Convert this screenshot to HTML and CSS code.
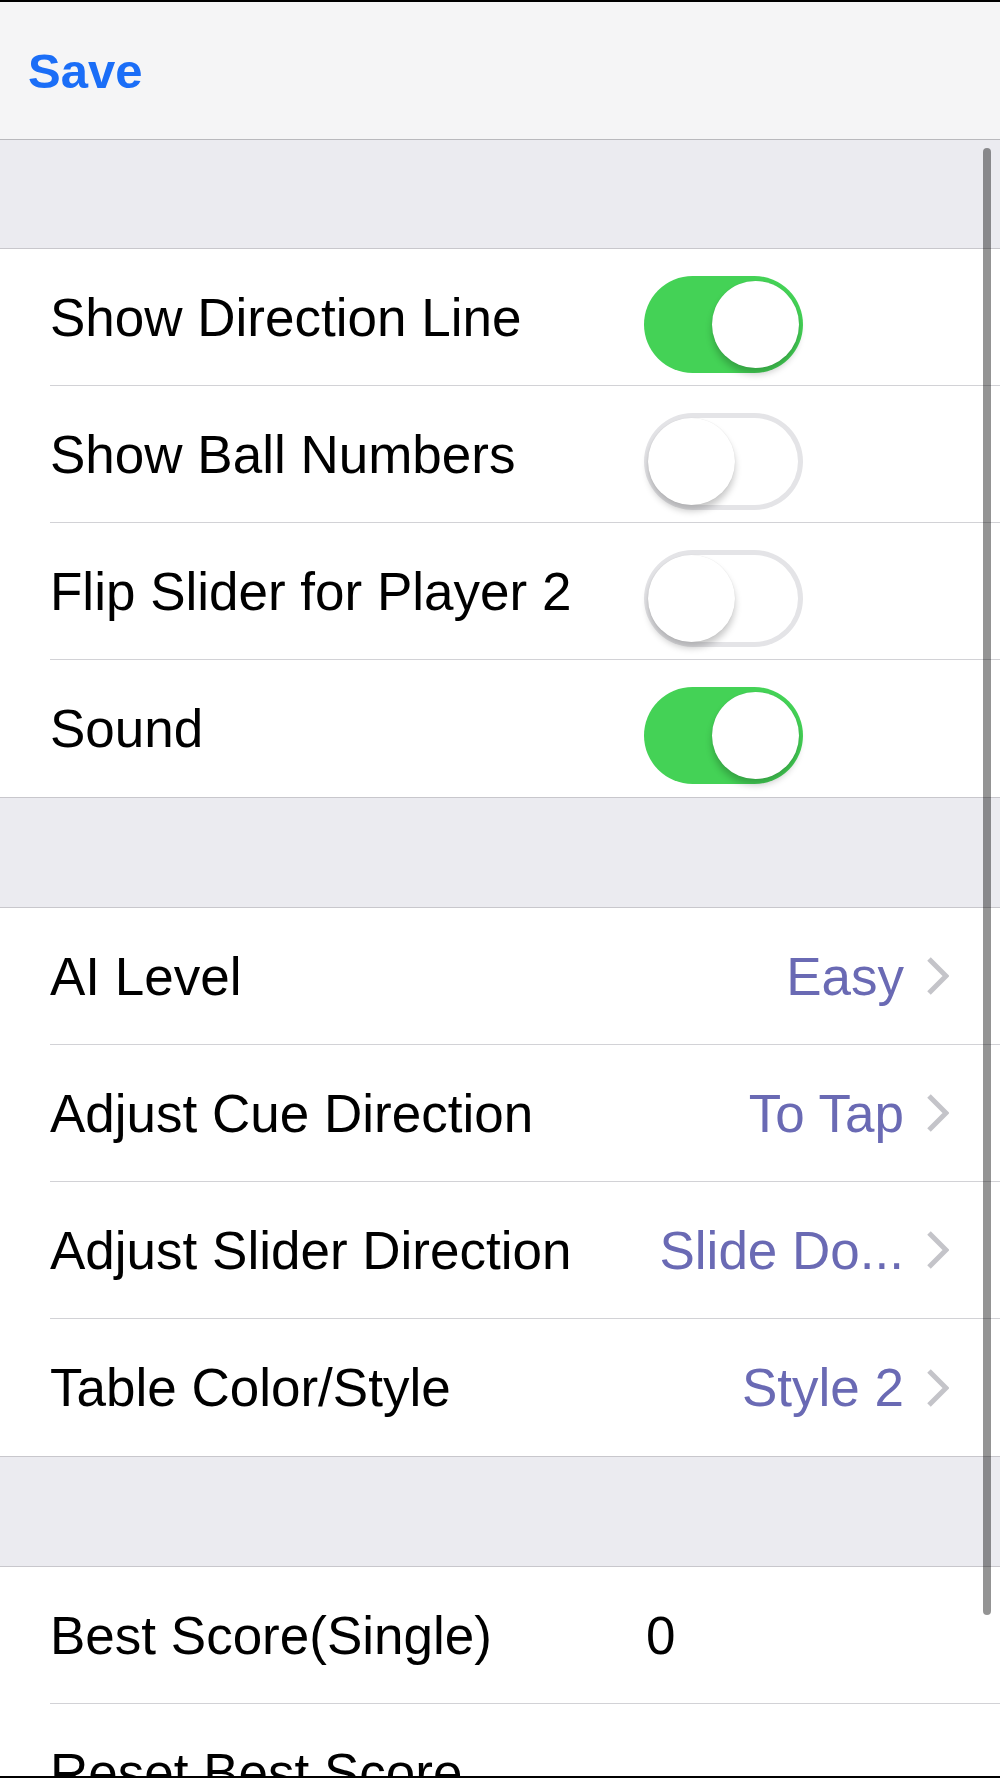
FILE: index.html
```html
<!DOCTYPE html>
<html>

<head>
    <link rel="stylesheet" href="styles.css">
</head>

<body>

    <div class="screen">
        <div class="edge"></div>

        <div class="nav-bar">
            <span class="nav-button">Save</span>
        </div>

        <div class="content">
            <div class="scroll-indicator"></div>

            <div class="spacer first"></div>
            <div class="group">
                <div class="row">
                    <span class="label">Show Direction Line</span>
                    <span class="toggle on"><span class="knob"></span></span>
                </div>
                <div class="row">
                    <span class="label">Show Ball Numbers</span>
                    <span class="toggle"><span class="knob"></span></span>
                </div>
                <div class="row">
                    <span class="label">Flip Slider for Player 2</span>
                    <span class="toggle"><span class="knob"></span></span>
                </div>
                <div class="row">
                    <span class="label">Sound</span>
                    <span class="toggle on"><span class="knob"></span></span>
                </div>
            </div>

            <div class="spacer"></div>
            <div class="group">
                <div class="row link">
                    <span class="label">AI Level</span>
                    <span class="detail">Easy</span>
                    <svg class="chevron" width="23" height="40" viewBox="0 0 23 40"><polyline points="3,3 20,20 3,37" /></svg>
                </div>
                <div class="row link">
                    <span class="label">Adjust Cue Direction</span>
                    <span class="detail">To Tap</span>
                    <svg class="chevron" width="23" height="40" viewBox="0 0 23 40"><polyline points="3,3 20,20 3,37" /></svg>
                </div>
                <div class="row link">
                    <span class="label">Adjust Slider Direction</span>
                    <span class="detail">Slide Do...</span>
                    <svg class="chevron" width="23" height="40" viewBox="0 0 23 40"><polyline points="3,3 20,20 3,37" /></svg>
                </div>
                <div class="row link">
                    <span class="label">Table Color/Style</span>
                    <span class="detail">Style 2</span>
                    <svg class="chevron" width="23" height="40" viewBox="0 0 23 40"><polyline points="3,3 20,20 3,37" /></svg>
                </div>
            </div>

            <div class="spacer"></div>
            <div class="group">
                <div class="row">
                    <span class="label">Best Score(Single)</span>
                    <span class="score">0</span>
                </div>
                <div class="row">
                    <span class="label">Reset Best Score</span>
                </div>
            </div>
        </div>

        <div class="edge"></div>
    </div>

</body>

</html>
```

FILE: styles.css
```css
body {
    margin: 0;
    font-family: "Liberation Sans", Arial, sans-serif;
    background-color: #ffffff;
    overflow: hidden;
}

.screen {
    width: 1000px;
    height: 1778px;
    display: flex;
    flex-direction: column;
}

.edge {
    height: 2px;
    background-color: #000;
    flex-shrink: 0;
}

.nav-bar {
    height: 137px;
    flex-shrink: 0;
    display: flex;
    align-items: center;
    padding-left: 28px;
    background-color: #f5f5f6;
    border-bottom: 1px solid #b9b9bd;
}

.nav-button {
    font-size: 49px;
    font-weight: bold;
    color: #1b6ef7;
}

.content {
    flex: 1;
    overflow: hidden;
    position: relative;
}

/* overlay scroll bar */
.scroll-indicator {
    position: absolute;
    left: 983px;
    top: 8px;
    width: 8px;
    height: 1467px;
    border-radius: 4px;
    background-color: rgba(0, 0, 0, 0.42);
    z-index: 2;
}

.spacer {
    height: 109px;
    background-color: #ebebf0;
}

.spacer.first {
    height: 108px;
}

.group {
    background-color: #fff;
    border-top: 1px solid #c8c7cc;
    border-bottom: 1px solid #c8c7cc;
}

.row {
    height: 136px;
    display: flex;
    align-items: center;
    margin-left: 50px;
    padding-right: 51px;
    border-bottom: 1px solid #d2d2d6;
    font-size: 53px;
    color: #000;
}

.row:last-child {
    border-bottom: none;
    height: 137px;
}

.label {
    width: 594px;
    flex-shrink: 0;
    white-space: nowrap;
}

.toggle {
    width: 159px;
    height: 97px;
    margin-top: 14px;
    box-sizing: border-box;
    border-radius: 49px;
    display: flex;
    align-items: center;
    padding: 0 4px;
    background-color: #fff;
    box-shadow: inset 0 0 0 5px #e4e4e7;
}

.toggle.on {
    justify-content: flex-end;
    background-color: #44d256;
    box-shadow: none;
}

.knob {
    width: 87px;
    height: 87px;
    border-radius: 50%;
    background-color: #fff;
    box-shadow: 0 6px 7px rgba(0, 0, 0, 0.22), 0 0 1px rgba(0, 0, 0, 0.12);
}

.detail {
    flex: 1;
    text-align: right;
    color: #6a6ab4;
    white-space: nowrap;
}

.chevron {
    margin-left: 22px;
    flex-shrink: 0;
    fill: none;
    stroke: #c4c4c9;
    stroke-width: 5;
}

.score {
    padding-left: 2px;
}
```
